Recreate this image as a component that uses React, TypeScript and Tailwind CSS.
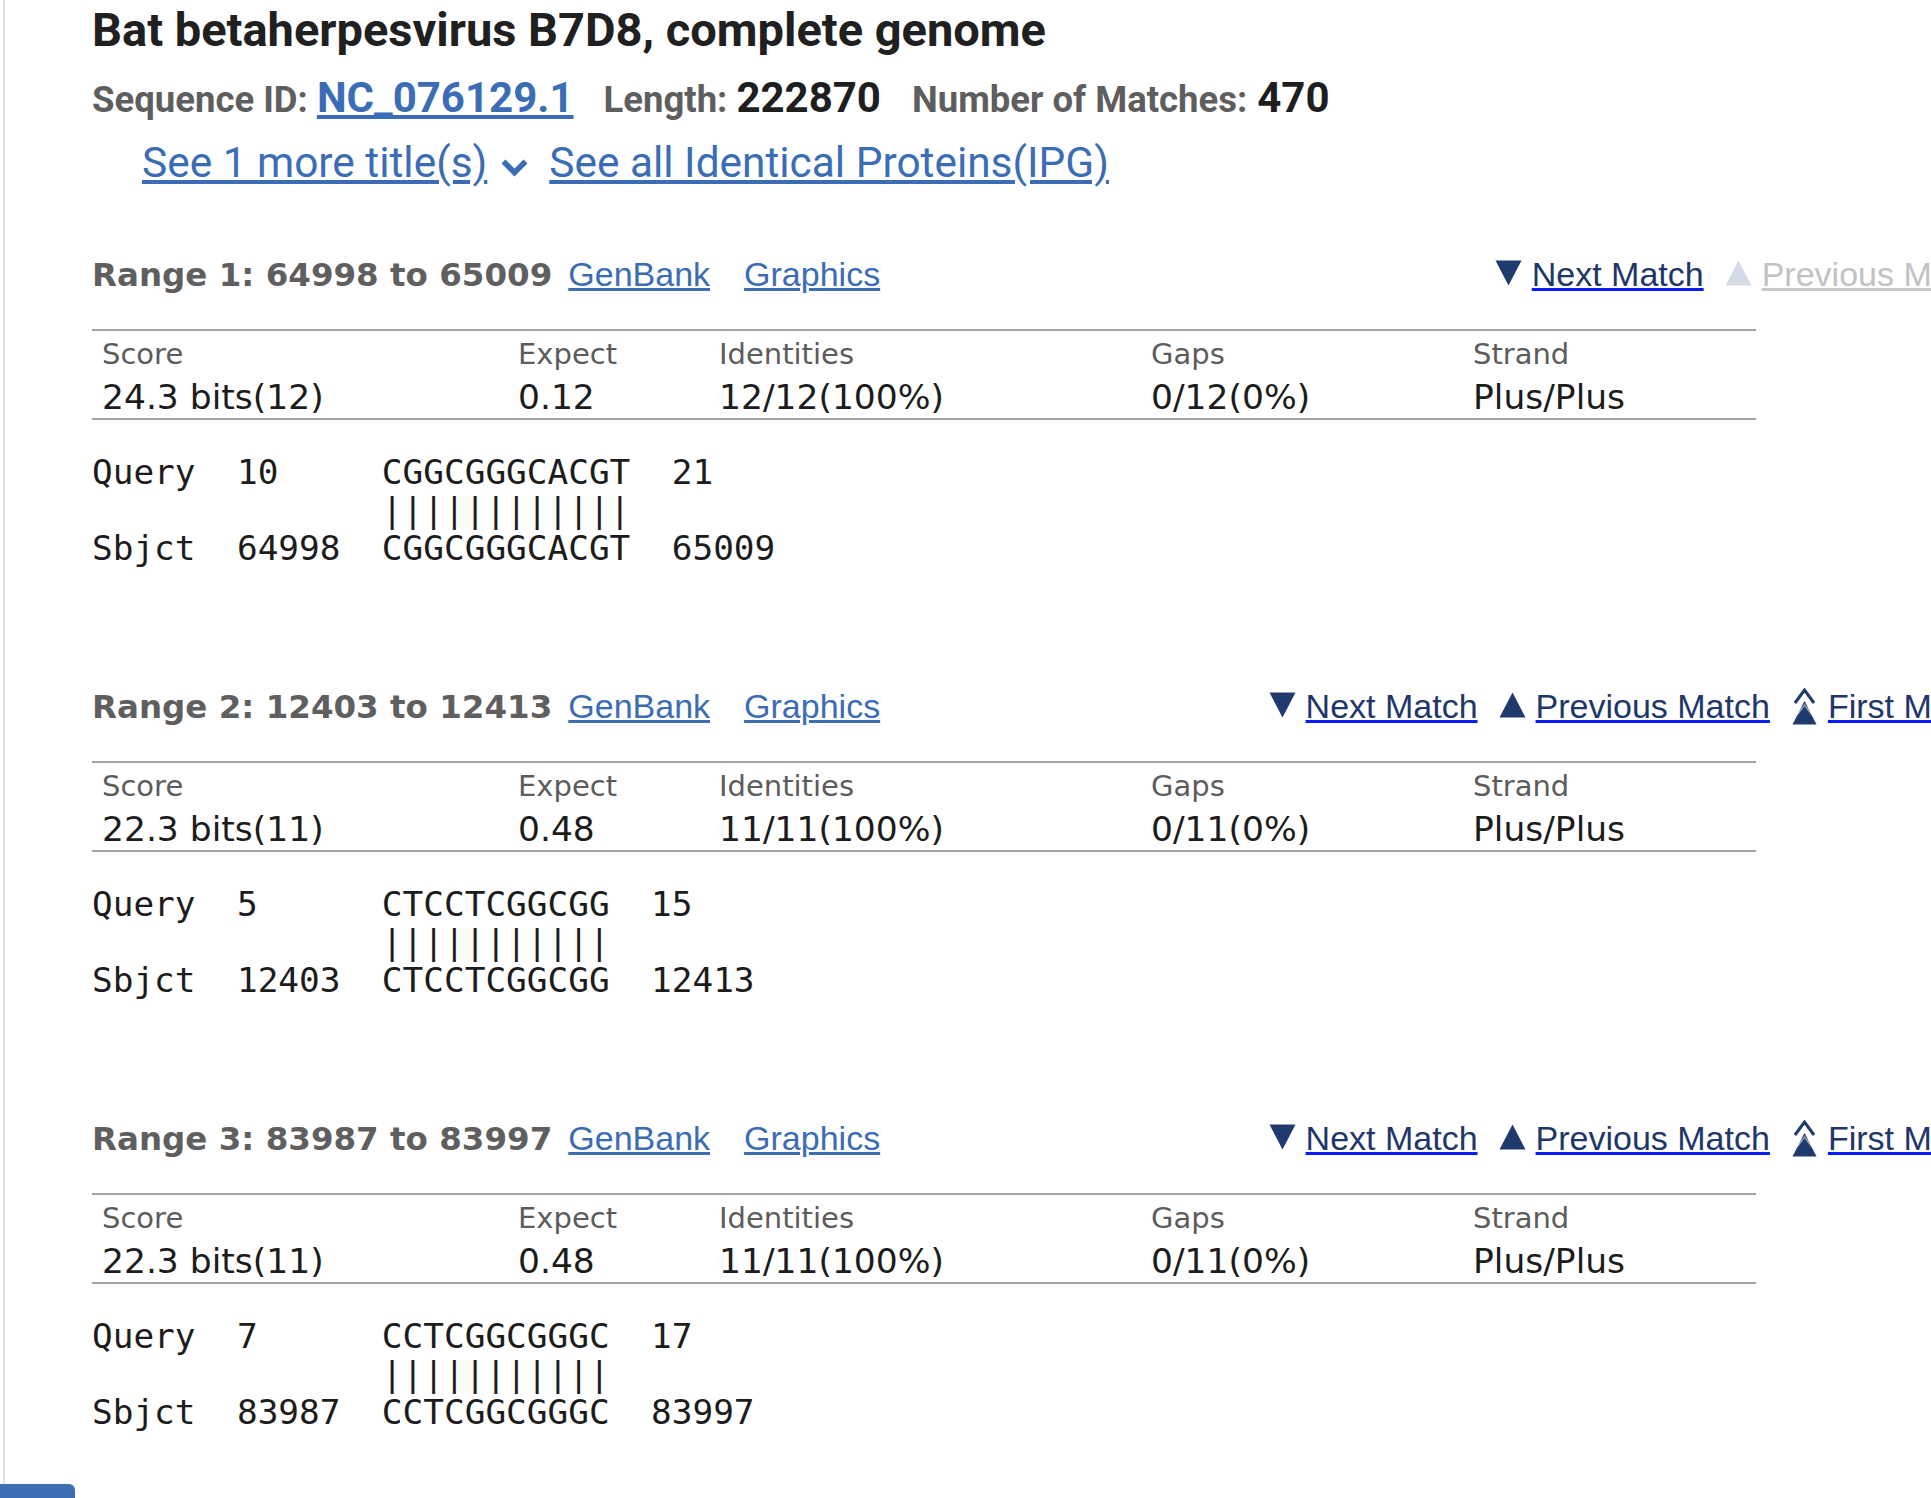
import React from "react";

type Range = {
  n: number;
  from: string;
  to: string;
  score: string;
  expect: string;
  ident: string;
  gaps: string;
  strand: string;
  lines: string[];
  first: boolean;
};

const ranges: Range[] = [
  {
    n: 1,
    from: "64998",
    to: "65009",
    score: "24.3 bits(12)",
    expect: "0.12",
    ident: "12/12(100%)",
    gaps: "0/12(0%)",
    strand: "Plus/Plus",
    lines: [
      "Query  10     CGGCGGGCACGT  21",
      "              ||||||||||||",
      "Sbjct  64998  CGGCGGGCACGT  65009",
    ],
    first: true,
  },
  {
    n: 2,
    from: "12403",
    to: "12413",
    score: "22.3 bits(11)",
    expect: "0.48",
    ident: "11/11(100%)",
    gaps: "0/11(0%)",
    strand: "Plus/Plus",
    lines: [
      "Query  5      CTCCTCGGCGG  15",
      "              |||||||||||",
      "Sbjct  12403  CTCCTCGGCGG  12413",
    ],
    first: false,
  },
  {
    n: 3,
    from: "83987",
    to: "83997",
    score: "22.3 bits(11)",
    expect: "0.48",
    ident: "11/11(100%)",
    gaps: "0/11(0%)",
    strand: "Plus/Plus",
    lines: [
      "Query  7      CCTCGGCGGGC  17",
      "              |||||||||||",
      "Sbjct  83987  CCTCGGCGGGC  83997",
    ],
    first: false,
  },
];

function TriDown() {
  return (
    <svg width="27" height="26" viewBox="0 0 27 26" className="shrink-0">
      <polygon points="0.5,0.5 26.5,0.5 13.5,25.5" fill="#1f3b6e" />
    </svg>
  );
}

function TriUp({ disabled }: { disabled?: boolean }) {
  return (
    <svg width="27" height="26" viewBox="0 0 27 26" className="shrink-0">
      <polygon points="13.5,0.5 26.5,25.5 0.5,25.5" fill={disabled ? "#d4dbe6" : "#1f3b6e"} />
    </svg>
  );
}

function FirstIcon() {
  return (
    <svg width="27" height="37" viewBox="0 0 27 37" className="mb-[-7px] shrink-0">
      <polyline points="4,15 13.5,2 23,15" fill="none" stroke="#1f3b6e" strokeWidth="3" />
      <polygon points="13.5,13 25.5,36.5 1.5,36.5" fill="#1f3b6e" />
      <polyline points="6,27 13.5,17 21,27" fill="none" stroke="#ffffff" strokeWidth="1.5" opacity="0.5" />
    </svg>
  );
}

function NavLink({ children, disabled }: { children: React.ReactNode; disabled?: boolean }) {
  return (
    <a
      href="#"
      className={
        disabled
          ? "text-[#c2c2c2] underline decoration-[#c8c8c8]"
          : "text-[#1e3669] underline decoration-[#0a1aff]"
      }
    >
      {children}
    </a>
  );
}

function RangeBlock({ r }: { r: Range }) {
  return (
    <section className={r.first ? "mt-[62px]" : "mt-[115px]"}>
      <div className="flex items-baseline leading-[48px]">
        <span className="font-['DejaVu_Sans',Verdana,sans-serif] text-[32.5px] font-bold text-[#5f5f5f]">
          Range {r.n}: {r.from} to {r.to}
        </span>
        <a
          href="#"
          className="ml-[16px] font-['Liberation_Sans',Arial,sans-serif] text-[34px] text-[#3a6db5] underline"
        >
          GenBank
        </a>
        <a
          href="#"
          className="ml-[34px] font-['Liberation_Sans',Arial,sans-serif] text-[34px] text-[#3a6db5] underline"
        >
          Graphics
        </a>
        <div className="ml-auto flex items-baseline font-['Liberation_Sans',Arial,sans-serif] text-[34px]">
          <TriDown />
          <span className="ml-[10px]">
            <NavLink>Next Match</NavLink>
          </span>
          <span className="ml-[21px]">
            <TriUp disabled={r.first} />
          </span>
          <span className="ml-[10px]">
            <NavLink disabled={r.first}>Previous Match</NavLink>
          </span>
          {!r.first && (
            <>
              <span className="ml-[21px]">
                <FirstIcon />
              </span>
              <span className="ml-[10px]">
                <NavLink>First Match</NavLink>
              </span>
            </>
          )}
        </div>
      </div>

      <div className="mt-[30px] w-[1664px] border-y-2 border-[#a2a2a2] pb-[2px] pl-[10px] pt-[7px] font-['DejaVu_Sans',Verdana,sans-serif]">
        <div className="grid grid-cols-[416px_201px_432px_322px_1fr] text-[29px] leading-[32px] text-[#5c5c5c]">
          <span>Score</span>
          <span>Expect</span>
          <span>Identities</span>
          <span>Gaps</span>
          <span>Strand</span>
        </div>
        <div className="mt-[8px] grid grid-cols-[416px_201px_432px_322px_1fr] text-[34.5px] leading-[38px] text-[#1c1c1c]">
          <span>{r.score}</span>
          <span>{r.expect}</span>
          <span>{r.ident}</span>
          <span>{r.gaps}</span>
          <span>{r.strand}</span>
        </div>
      </div>

      <pre className="mt-[33px] font-['DejaVu_Sans_Mono',monospace] text-[34.4px] leading-[38px] text-[#1c1c1c]">
        {r.lines.join("\n")}
      </pre>
    </section>
  );
}

export default function App() {
  return (
    <div className="relative min-h-[1498px] w-full overflow-hidden bg-white">
      <div className="ml-[3px] min-h-[1498px] border-l-2 border-[#e0e0e0] pl-[87px] pt-[2px]">
        <div className="w-[1904px]">
          <h1 className="font-['Roboto',Arial,sans-serif] text-[47px] font-bold leading-[56px] text-[#202020]">
            Bat betaherpesvirus B7D8, complete genome
          </h1>

          <div className="mt-[16px] flex items-baseline font-['Roboto',Arial,sans-serif] font-bold leading-[48px]">
            <span className="text-[36.5px] text-[#5e5e5e]">Sequence ID:</span>
            <a href="#" className="ml-[9px] text-[42px] text-[#3a6db5] underline">
              NC_076129.1
            </a>
            <span className="ml-[30px] text-[36.5px] text-[#5e5e5e]">Length:</span>
            <span className="ml-[9px] text-[42px] text-[#1e1e1e]">222870</span>
            <span className="ml-[31px] text-[36.5px] text-[#5e5e5e]">Number of Matches:</span>
            <span className="ml-[10px] text-[42px] text-[#1e1e1e]">470</span>
          </div>

          <div className="ml-[50px] mt-[14px] flex items-baseline font-['Roboto',Arial,sans-serif] text-[42.4px] leading-[50px] text-[#3a6db5]">
            <a href="#" className="underline">
              See 1 more title(s)
            </a>
            <svg width="27" height="19" viewBox="0 0 27 19" className="mb-[9px] ml-[14px] shrink-0">
              <polyline points="2.5,3.5 13.5,14.5 24.5,3.5" fill="none" stroke="#3a6db5" strokeWidth="5.5" />
            </svg>
            <a href="#" className="ml-[21px] underline">
              See all Identical Proteins(IPG)
            </a>
          </div>

          {ranges.map((r) => (
            <RangeBlock key={r.n} r={r} />
          ))}
        </div>
      </div>
      <div className="absolute bottom-0 left-0 h-[14px] w-[75px] rounded-tr-[6px] bg-[#3d6eb4]" />
    </div>
  );
}
